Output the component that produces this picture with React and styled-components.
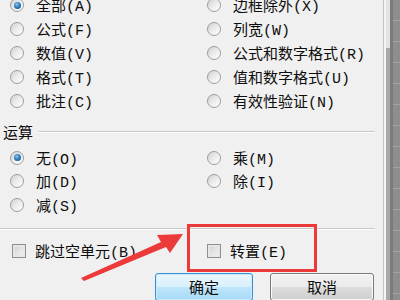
import React from "react";
import styled, { createGlobalStyle } from "styled-components";

const GlobalStyle = createGlobalStyle`
  html, body {
    margin: 0;
    padding: 0;
    background: #f0f0f0;
  }
`;

const Page = styled.div`
  position: relative;
  display: flex;
  width: 400px;
  height: 300px;
  overflow: hidden;
  font-family: "Liberation Mono", "Noto Sans CJK SC", monospace;
  font-size: 15px;
  color: #0d0d0d;
`;

const Dialog = styled.div`
  width: 383px;
  flex: none;
  background: #f0f0f0;
  margin-top: -7px;
`;

const OptionGrid = styled.div`
  display: grid;
  grid-template-columns: ${(p) => p.$first || 197}px 1fr;
  padding-left: ${(p) => p.$left || 10}px;
`;

const Option = styled.label`
  display: flex;
  align-items: center;
  gap: ${(p) => p.$gap || 12}px;
  height: ${(p) => p.$h || 24}px;
  white-space: nowrap;
`;

const Radio = styled.span`
  position: relative;
  width: 14px;
  height: 14px;
  flex: none;
  box-sizing: border-box;
  border-radius: 50%;
  border: 1px solid #9c9c9c;
  background: linear-gradient(135deg, #d2d2d2 0%, #eeeeee 55%, #ffffff 100%);
  &::after {
    content: "";
    display: ${(p) => (p.$on ? "block" : "none")};
    position: absolute;
    left: 2.5px;
    top: 2.5px;
    width: 7px;
    height: 7px;
    border-radius: 50%;
    background: radial-gradient(circle at 40% 35%, #8cc8f0 0%, #2f7fc0 45%, #164f86 100%);
  }
`;

const Check = styled.span`
  width: 14px;
  height: 14px;
  flex: none;
  box-sizing: border-box;
  border: 1px solid #8e8f8f;
  box-shadow: inset 0 0 0 2px #e6e6e6;
  background-image: linear-gradient(135deg, #cfcfcf, #f7f7f7);
`;

const GroupHead = styled.div`
  display: flex;
  align-items: center;
  gap: 6px;
  height: 20px;
  margin-top: 9px;
  padding: 0 8px 0 3px;
`;

const Rule = styled.div`
  flex: 1;
  height: 1px;
  background: #c8c8c8;
  border-bottom: 1px solid #fff;
`;

const Divider = styled.div`
  height: 1px;
  margin: ${(p) => p.$m || "0"};
  width: 375px;
  background: #c8c8c8;
  border-bottom: 1px solid #fff;
`;

const Buttons = styled.div`
  display: flex;
  justify-content: flex-end;
  gap: 17px;
  padding-right: 9px;
  margin-top: 10px;
`;

const Button = styled.div`
  display: flex;
  align-items: center;
  justify-content: center;
  width: ${(p) => p.$w}px;
  height: 28px;
  box-sizing: border-box;
  border-radius: 3px;
  border: 1px solid ${(p) => (p.$primary ? "#3c8fd0" : "#7a7a7a")};
  background: ${(p) =>
    p.$primary
      ? "linear-gradient(#eaf6fd 0%, #d9f0fc 50%, #bee6fd 51%, #a7d9f5 100%)"
      : "linear-gradient(#f2f2f2 0%, #ebebeb 50%, #dddddd 51%, #cfcfcf 100%)"};
  box-shadow: inset 0 0 0 1px ${(p) => (p.$primary ? "#c9ecfd" : "#fafafa")};
  font-size: 15px;
`;

const Edge = styled.div`
  display: flex;
  flex: 1;
  border-left: 1px solid #c4c4c4;
`;

const Gap = styled.div`
  width: 2px;
  background: #f4f4f4;
`;

const Scroll = styled.div`
  width: 4px;
  background: linear-gradient(#e4e4e4 0, #e4e4e4 48px, #a9a9a9 48px);
`;

const Dark = styled.div`
  width: 3px;
  background: #7b7b7b;
`;

const Sheet = styled.div`
  flex: 1;
  background: repeating-linear-gradient(#8e8e8e 0, #8e8e8e 20px, #a2a2a2 20px, #a2a2a2 21px);
`;

const RedBox = styled.div`
  position: absolute;
  left: 187px;
  top: 224px;
  width: 130px;
  height: 48px;
  box-sizing: border-box;
  border: 3px solid #ec3a3a;
`;

const Arrow = styled.svg`
  position: absolute;
  left: 0;
  top: 0;
`;

const Opt = ({ on, h, children }) => (
  <Option $h={h}>
    <Radio $on={on} />
    <span>{children}</span>
  </Option>
);

const App = () => (
  <Page>
    <GlobalStyle />
    <Dialog>
      <OptionGrid>
        <Opt on>全部(A)</Opt>
        <Opt>边框除外(X)</Opt>
        <Opt>公式(F)</Opt>
        <Opt>列宽(W)</Opt>
        <Opt>数值(V)</Opt>
        <Opt>公式和数字格式(R)</Opt>
        <Opt>格式(T)</Opt>
        <Opt>值和数字格式(U)</Opt>
        <Opt>批注(C)</Opt>
        <Opt>有效性验证(N)</Opt>
      </OptionGrid>
      <GroupHead>
        <span>运算</span>
        <Rule />
      </GroupHead>
      <OptionGrid $first={197} style={{ marginTop: 4 }}>
        <Opt on h={23.5}>无(O)</Opt>
        <Opt h={23.5}>乘(M)</Opt>
        <Opt h={23.5}>加(D)</Opt>
        <Opt h={23.5}>除(I)</Opt>
        <Opt h={23.5}>减(S)</Opt>
      </OptionGrid>
      <Divider $m="11px 0 0 0" />
      <OptionGrid $left={12} $first={195} style={{ marginTop: 9 }}>
        <Option $gap={9}>
          <Check />
          <span>跳过空单元(B)</span>
        </Option>
        <Option $gap={9}>
          <Check />
          <span>转置(E)</span>
        </Option>
      </OptionGrid>
      <Buttons>
        <Button $primary $w={98}>确定</Button>
        <Button $w={104}>取消</Button>
      </Buttons>
    </Dialog>
    <Edge>
      <Gap />
      <Scroll />
      <Dark />
      <Sheet />
    </Edge>
    <RedBox />
    <Arrow width="400" height="300" viewBox="0 0 400 300">
      <polygon
        points="81,278 161,242 157,235 183,234 170,253 166,247 84,281"
        fill="#ec3a3a"
      />
    </Arrow>
  </Page>
);

export default App;
